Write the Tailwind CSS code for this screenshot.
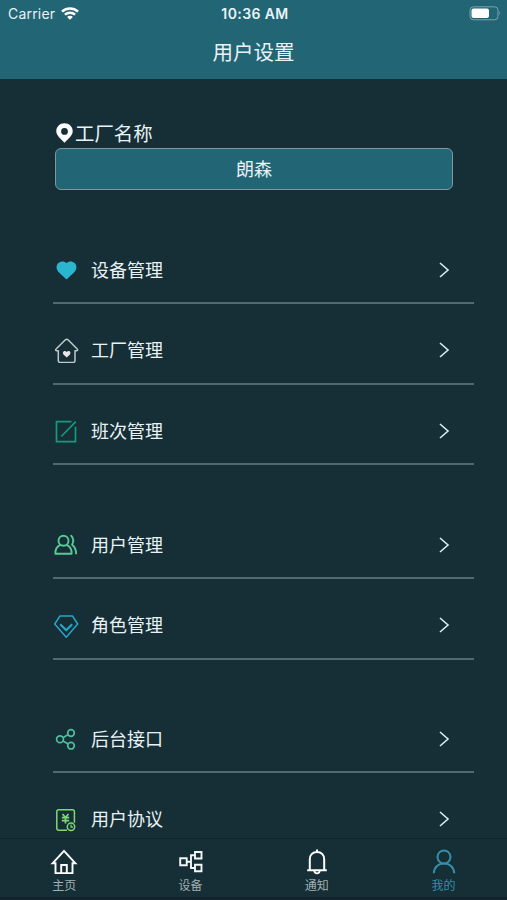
<!DOCTYPE html>
<html lang="zh-CN">
<head>
<meta charset="utf-8">
<title>用户设置</title>
<script src="https://cdn.jsdelivr.net/npm/@tailwindcss/browser@4"></script>
</head>
<body class="bg-[#162e35]">
<div class="flex h-[900px] w-[507px] flex-col overflow-hidden bg-[#162e35] font-['Inter','Noto_Sans_CJK_SC',sans-serif] text-[#e9f3f5]">
  <header class="h-[79px] shrink-0 bg-[#226575]">
    <div class="grid h-[27px] grid-cols-3 items-center pl-2 pr-[5px] text-[14px] leading-none">
      <div class="flex items-center gap-[6px]"><span class="tracking-[0.2px]">Carrier</span>
        <svg class="h-[13px] w-[18px]" viewBox="0 0 18 13" fill="none" stroke="#fff" stroke-width="2.5"><path d="M1 4.6C5.500.4 12.500.4 17 4.600M3.900 7.700c2.900-2.700 7.300-2.700 10.200 0"/><path d="M9 12.700 6.100 9.900c1.600-1.500 4.200-1.500 5.800 0z" fill="#fff" stroke="none"/></svg>
      </div>
      <div class="text-center text-[14px] font-semibold tracking-[0.4px]">10:36 AM</div>
      <svg class="h-[15px] w-[33px] justify-self-end" viewBox="0 0 33 15"><rect x="1" y=".8" width="28" height="13" rx="3.500" fill="none" stroke="#7ba4ae"/><rect x="2.500" y="2.500" width="17.500" height="9.500" rx="2" fill="#fff"/><path d="M30.500 5q1.800 2.300 0 4.600z" fill="#7ba4ae"/></svg>
    </div>
    <h1 class="pt-[11px] text-center text-[20.5px] leading-[30px]">用户设置</h1>
  </header>

  <main class="flex min-h-0 flex-1 flex-col overflow-hidden pl-[53px] pr-[33px]">
    <div class="mt-[42px] flex h-[26px] items-center pl-[3px] text-[19.400px]">
      <svg class="mr-[2px] h-[20px] w-[17px] -translate-y-px" viewBox="0 0 17 20"><path fill="#fff" fill-rule="evenodd" d="M8.500.3C3.900.3.300 3.800.300 8.300c0 3.900 3.500 6.800 8.200 11.400 4.700-4.600 8.200-7.500 8.200-11.400C16.700 3.800 13.100.3 8.500.3Zm0 4.700a3.400 3.400 0 1 1 0 6.800 3.400 3.400 0 0 1 0-6.800Z"/></svg>
      <span class="pt-[2px]">工厂名称</span>
    </div>
    <div class="mt-px ml-[2px] flex h-[42px] w-[398px] shrink-0 items-center justify-center rounded-[6px] border-[1.500px] border-[#7f989b] bg-[#226575] pt-px text-[18px]">朗森</div>

    <ul class="mt-[47px] flex flex-col gap-[13.500px] text-[18px]">
      <li class="flex h-[67px] shrink-0 items-center border-b-2 border-[#506b70] pr-[24px]">
        <svg class="mr-[12px] ml-px size-[25px]" viewBox="0 0 25 25"><path fill="#2bb6cf" d="M12 22 4.500 15C2 12 2 8.200 4.300 6c2.300-2.200 6.200-2 8.200 0 2-2 5.900-2.200 8.200 0 2.300 2.200 2.300 6-.2 9L13 22q-.5.500-1 0z"/></svg>
        <span class="flex-1 pt-px">设备管理</span>
        <svg class="h-[16px] w-[11px]" viewBox="0 0 11 16" fill="none" stroke="#d7eef1" stroke-width="1.600"><path d="m1 1 8 7-8 7"/></svg>
      </li>
      <li class="flex h-[67px] shrink-0 items-center border-b-2 border-[#506b70] pr-[24px]">
        <svg class="mr-[12px] ml-px size-[25px]" viewBox="0 0 25 25"><path fill="none" stroke="#bdcacc" stroke-width="1.500" stroke-linejoin="round" d="M11.400 1.800q1.300-1 2.600 0l9 9c1.100 1 .5 2-.5 2h-1.500v9.700q0 2-2 2H6.300q-2 0-2-2v-9.700H2.800c-1.100 0-1.600-1-.5-2z"/><path fill="#e9e3e8" d="m12.700 19.500-3-2.800c-2.200-2.200.9-5.200 3-2.600 2.100-2.600 5.200.4 3 2.600z"/></svg>
        <span class="flex-1">工厂管理</span>
        <svg class="h-[16px] w-[11px]" viewBox="0 0 11 16" fill="none" stroke="#d7eef1" stroke-width="1.600"><path d="m1 1 8 7-8 7"/></svg>
      </li>
      <li class="flex h-[67px] shrink-0 items-center border-b-2 border-[#506b70] pr-[24px]">
        <svg class="mr-[12px] ml-px size-[25px]" viewBox="0 0 25 25" fill="none" stroke="#129b7d" stroke-width="1.700"><path d="M17.500 3.700H2.500v20h19V8.800M7.300 18.500 21.800 3.700"/></svg>
        <span class="flex-1 pt-px">班次管理</span>
        <svg class="h-[16px] w-[11px]" viewBox="0 0 11 16" fill="none" stroke="#d7eef1" stroke-width="1.600"><path d="m1 1 8 7-8 7"/></svg>
      </li>
      <li class="mt-[33.500px] flex h-[67px] shrink-0 items-center border-b-2 border-[#506b70] pr-[24px]">
        <svg class="mr-[12px] ml-px size-[25px]" viewBox="0 0 25 25" fill="none" stroke="#58c999" stroke-width="1.900" stroke-linecap="round" stroke-linejoin="round"><circle cx="9.500" cy="8.700" r="5"/><path d="M6 13.200c-3 1.400-4.800 4.700-4.600 8.600h16.200c.2-3.900-1.600-7.200-4.600-8.600M17.200 3.700c2.300 2.700 2.600 6.100.9 9 2.500 1.800 3.900 4.900 4 8.900"/></svg>
        <span class="flex-1 pt-px">用户管理</span>
        <svg class="h-[16px] w-[11px]" viewBox="0 0 11 16" fill="none" stroke="#d7eef1" stroke-width="1.600"><path d="m1 1 8 7-8 7"/></svg>
      </li>
      <li class="flex h-[67px] shrink-0 items-center border-b-2 border-[#506b70] pr-[24px]">
        <svg class="mr-[12px] ml-px size-[25px]" viewBox="0 0 25 25" fill="none" stroke="#27a5c4" stroke-linejoin="round"><path stroke-width="1.500" d="M6 3h12.500L23.700 11 12.200 24.200.7 11z"/><path stroke-width="2.200" d="m6.200 11.200 6 6 6-6"/></svg>
        <span class="flex-1">角色管理</span>
        <svg class="h-[16px] w-[11px]" viewBox="0 0 11 16" fill="none" stroke="#d7eef1" stroke-width="1.600"><path d="m1 1 8 7-8 7"/></svg>
      </li>
      <li class="mt-[33px] flex h-[67px] shrink-0 items-center border-b-2 border-[#506b70] pr-[24px]">
        <svg class="mr-[12px] ml-px size-[25px]" viewBox="0 0 25 25" fill="none" stroke="#4dbd9e" stroke-width="1.700"><circle cx="6" cy="13.300" r="3.400"/><circle cx="17" cy="7" r="3.300"/><circle cx="17" cy="19.700" r="3.300"/><path d="m9 11.700 5.200-3.100M9 15l5.200 3.100"/></svg>
        <span class="flex-1 pt-px">后台接口</span>
        <svg class="h-[16px] w-[11px]" viewBox="0 0 11 16" fill="none" stroke="#d7eef1" stroke-width="1.600"><path d="m1 1 8 7-8 7"/></svg>
      </li>
      <li class="flex h-[67px] shrink-0 items-center border-b-2 border-[#506b70] pr-[24px]">
        <svg class="mr-[12px] ml-px size-[25px]" viewBox="0 0 25 25" fill="none" stroke="#7fd873" stroke-width="1.500"><path d="M13 23.200H4.800q-2 0-2-2V4.800q0-2 2-2h13.600q2 0 2 2v11"/><path stroke-width="1.700" d="m8.500 7 3 3.500 3-3.500M7.800 10.700h7.400M7.800 13.600h7.400M11.500 10.300v6.300"/><circle cx="17" cy="19.800" r="3.700"/><path stroke-width="1.200" d="M17 17.600v2.500h2"/></svg>
        <span class="flex-1">用户协议</span>
        <svg class="h-[16px] w-[11px]" viewBox="0 0 11 16" fill="none" stroke="#d7eef1" stroke-width="1.600"><path d="m1 1 8 7-8 7"/></svg>
      </li>
    </ul>
  </main>

  <nav class="grid h-[62px] shrink-0 grid-cols-4 border-t border-b-[3px] border-t-[#10262c] border-b-[#14232d] bg-[#162e35] text-[12px] leading-[16px] text-[#a3b0b4]">
    <a class="flex flex-col items-center pt-[9px] pl-[2px]">
      <svg class="h-[28px] w-[28px]" viewBox="0 0 28 28" fill="none" stroke="#fff" stroke-width="1.900"><path d="M5.500 15.300H2.600L14 2.800l11.400 12.500h-2.900v9.800h-17z"/><path d="M11.200 25v-8h5.600v8"/></svg>
      <span class="pt-[2px]">主页</span>
    </a>
    <a class="flex flex-col items-center pt-[9px] pl-px">
      <svg class="h-[28px] w-[28px]" viewBox="0 0 28 28" fill="none" stroke="#f2f7f7" stroke-width="1.900"><path d="M3.200 10.200h6.500v7H3.200zM18 4h6.500v6.500H18zM18 16.800h6.500v6.500H18zM10 13.700h4M18 7.300h-4V20h4"/></svg>
      <span class="pt-[2px]">设备</span>
    </a>
    <a class="flex flex-col items-center pt-[9px]">
      <svg class="h-[28px] w-[28px]" viewBox="0 0 28 28" fill="none" stroke="#fff" stroke-width="2"><path d="M4.200 22.300h19.600M6.800 22V11.500c0-4.500 3-7.500 7.200-7.500s7.200 3 7.200 7.500V22M14 1.500V4"/><path stroke-width="1.800" d="M11.300 22.700c.2 3.500 5.200 3.500 5.400 0"/></svg>
      <span class="pt-[2px]">通知</span>
    </a>
    <a class="flex flex-col items-center pt-[9px] text-[#358fa8]">
      <svg class="h-[28px] w-[28px]" viewBox="0 0 28 28" fill="none" stroke="currentColor" stroke-width="2"><circle cx="14" cy="9" r="6.500"/><path d="M3.800 25.200C4 19.500 8 15.500 14 15.500s10 4 10.200 9.700"/></svg>
      <span class="pt-[2px]">我的</span>
    </a>
  </nav>
</div>
</body>
</html>
